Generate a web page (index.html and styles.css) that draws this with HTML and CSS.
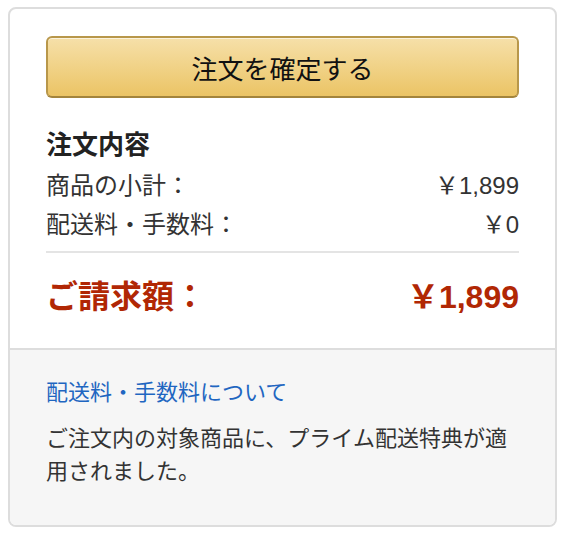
FILE: index.html
```html
<!DOCTYPE html>
<html lang="ja">
<head>
<meta charset="utf-8">
<link rel="stylesheet" href="styles.css">
</head>
<body>
<div class="card">
  <div class="main">
    <button class="place-order">注文を確定する</button>
    <h2 class="summary-title">注文内容</h2>
    <div class="row"><span>商品の小計：</span><span>￥1,899</span></div>
    <div class="row"><span>配送料・手数料：</span><span>￥0</span></div>
    <hr class="divider">
    <div class="total"><span>ご請求額：</span><span>￥1,899</span></div>
  </div>
  <div class="foot">
    <a class="link" href="#">配送料・手数料について</a>
    <p class="note">ご注文内の対象商品に、プライム配送特典が適用されました。</p>
  </div>
</div>
</body>
</html>
```
FILE: styles.css
```css
html, body {
  margin: 0;
  padding: 0;
  background: #fff;
}
body {
  font-family: "Liberation Sans", "Noto Sans CJK JP", sans-serif;
  color: #333;
}
.card {
  margin: 7px 9px 0 8px;
  border: 2px solid #dddddd;
  border-radius: 8px;
  overflow: hidden;
  height: 520px;
  box-sizing: border-box;
  display: flex;
  flex-direction: column;
}
.main {
  padding: 27px 36px 29px 36px;
}
.place-order {
  display: block;
  width: 100%;
  height: 62px;
  box-sizing: border-box;
  border: 2px solid #b8974a;
  border-bottom-color: #a3843c;
  border-radius: 6px;
  background: linear-gradient(to bottom, #f6e0a9, #ebc465);
  box-shadow: inset 0 1px 0 rgba(255,255,255,0.6);
  font-family: "Noto Sans CJK JP", sans-serif;
  font-size: 26px;
  color: #111;
  padding: 0;
  margin: 0;
  cursor: pointer;
}
.summary-title {
  margin: 31px 0 5px 0;
  font-size: 26px;
  line-height: 32px;
  font-weight: bold;
  color: #222;
}
.row {
  display: flex;
  justify-content: space-between;
  font-size: 24px;
  line-height: 39px;
  color: #333;
}
.divider {
  margin: 7px 0 0 0;
  border: 0;
  height: 2px;
  background: #e4e4e4;
}
.total {
  margin-top: 22px;
  display: flex;
  justify-content: space-between;
  font-size: 32px;
  line-height: 44px;
  font-weight: bold;
  color: #b12704;
}
.foot {
  flex: 1;
  background: #f6f6f6;
  border-top: 2px solid #dddddd;
  padding: 26px 36px 0 36px;
}
.link {
  display: block;
  font-size: 22px;
  line-height: 33px;
  color: #1f66c1;
  text-decoration: none;
}
.note {
  margin: 13px 0 0 0;
  font-size: 22px;
  line-height: 33px;
  color: #333;
}
```
